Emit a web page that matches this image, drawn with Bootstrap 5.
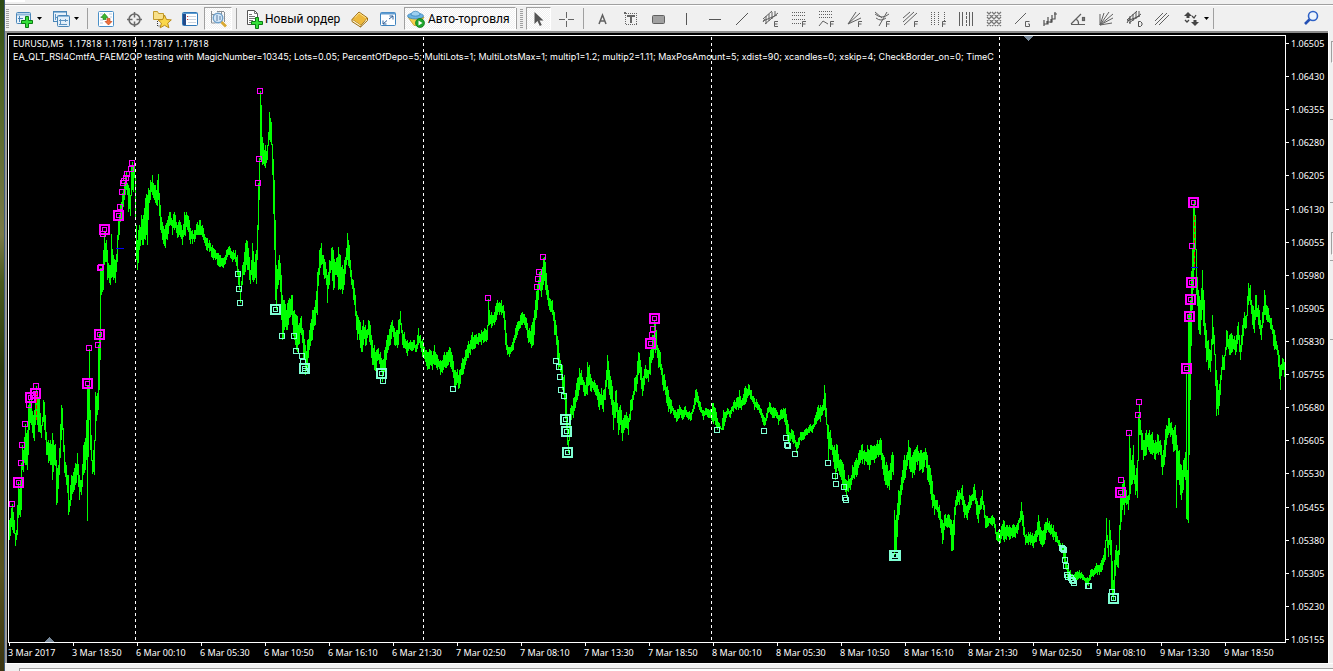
<!DOCTYPE html>
<html lang="ru">
<head>
<meta charset="utf-8">
<meta name="viewport" content="width=device-width, initial-scale=1">
<title>EURUSD,M5</title>
<link rel="stylesheet" href="https://cdn.jsdelivr.net/npm/bootstrap@5.3.0/dist/css/bootstrap.min.css">
<style>
  body { background: #f0f0f0; font-family: "Noto Sans", sans-serif; font-size: 9px; line-height: 13px; color: #000; overflow: hidden; }
  .wallpaper { width: 5px; border-right: 1px solid #3f5a78; background: linear-gradient(#2c4a14, #4f6424 12%, #7a7a48 35%, #4a5a1e 42%, #2c3a0c 55%, #4d4416 70%, #57531f 85%, #3a3410); }
  .menu-edge { height: 5px; border-bottom: 1px solid #a0a0a0; }
  .menu-edge i { width: 20px; height: 2px; background: #fff; }
  .tool-row { height: 26px; border-top: 1px solid #fff; padding-left: 1px; font: 12px/16px Roboto, sans-serif; }
  .tool-row button { border: 0; padding: 0; background: none; width: 28px; height: 23px; display: flex; align-items: center; justify-content: center; flex: none; color: #000; white-space: nowrap; }
  .tool-row svg { width: 20px; height: 20px; flex: none; }
  .tool-row button.with-menu { width: 37px; gap: 3px; }
  .tool-row svg.caret { width: 5px; height: 3px; }
  .tool-row button.order { width: 101px; justify-content: flex-start; }
  .tool-row button.auto { width: 112px; margin-left: 2px; gap: 2px; justify-content: flex-start; padding-left: 1px; }
  .tool-row button.arrow { width: 25px; }
  .tool-row button.pressed { border: 1px solid #a0a0a0; border-right-color: #fff; border-bottom-color: #fff; background: repeating-conic-gradient(#fff 0 25%, #f0f0f0 0 50%) 0 0 / 2px 2px; }
  .grip { width: 3px; height: 20px; background: repeating-linear-gradient(#a0a0a0 0 1px, #f0f0f0 1px 2px); flex: none; }
  .rule + .grip { margin: 0 3px; }
  .rule { width: 1px; height: 21px; background: #a0a0a0; flex: none; }
  .chart-window { background: #000; border-left: 2px solid #9a9a9a; border-top: 2px solid #8a8a8a; color: #fff; padding: 2px 0 0 1px; }
  .plot { border: 1px solid #fff; }
  .plot svg { width: 100%; height: 100%; }
  .plot-text { padding: 1px 0 0 4px; white-space: pre; }
  #status { font-family: Inter, sans-serif; }
  .prices { width: 42px; padding-top: 2px; margin-bottom: -3px; }
  .prices div::before { content: ""; width: 3px; height: 1px; background: #fff; margin-right: 2px; }
  .times { display: grid; grid-template-columns: repeat(20, 1fr); height: 20px; margin-right: 40px; }
  .times div { white-space: nowrap; padding-top: 3px; position: relative; }
  .times div::before { content: ""; position: absolute; left: 1px; top: 0; width: 1px; height: 3px; background: #fff; }
  .side { width: 5px; border-left: 1px solid #fff; display: grid; grid-template-rows: 10px 22px 56px 83px 30px 23px 5px 79px 1fr; padding-left: 1px; }
  .side i.lined { border-top: 1px solid #a0a0a0; }
  .side i.boxed { border: 1px solid #a0a0a0; border-right: 0; border-bottom-color: #fff; margin-left: 1px; }
  .below { height: 8px; border-top: 1px solid #fff; padding: 4px 0 0 14px; }
  .below div { border: 1px solid #a0a0a0; border-bottom: 0; border-right: 0; background: #fff; height: 3px; }
</style>
<script src="https://cdn.jsdelivr.net/npm/bootstrap@5.3.0/dist/js/bootstrap.bundle.min.js"></script>
</head>
<body>
<div class="d-flex vh-100">
  <div class="wallpaper flex-shrink-0"></div>
  <main class="d-flex flex-column flex-grow-1 overflow-hidden">
    <div class="menu-edge flex-shrink-0 d-flex"><i></i></div>

    <div class="tool-row d-flex align-items-center flex-shrink-0" role="toolbar" aria-label="Панель инструментов">
      <span class="grip"></span>
      <button class="with-menu" aria-label="Новый график"><svg viewBox="0 0 20 20"><rect x="2.500" y="3.500" width="14" height="11" rx="1" fill="#e8f2fb" stroke="#4a86b8"/><path d="M3 5.500h13" stroke="#8fb8da" stroke-width="2"/><path d="M5.500 7v6M4 9.500h5" stroke="#4a86b8" fill="none"/><path d="M11.500 7.500h3v4h4v3h-4v4h-3v-4h-4v-3h4z" fill="#35e03a" stroke="#0b7d12"/></svg><svg class="caret" viewBox="0 0 5 3"><path d="M0 0h5L2.500 3z"/></svg></button>
      <button class="with-menu" aria-label="Профили"><svg viewBox="0 0 20 20"><rect x="2.500" y="2.500" width="13" height="10" fill="#e8f2fb" stroke="#4a86b8"/><path d="M3 3.500h12" stroke="#8fb8da"/><path d="M4.500 5v6M4 8.500h3" stroke="#5e94c2"/><rect x="6.500" y="6.500" width="12" height="11" rx="1" fill="#e3eff9" stroke="#4a86b8"/><path d="M7 7.500h11" stroke="#8fb8da"/><path d="M8 11.500h9M9.500 10v6M14.500 10v3M8 15.500h8" stroke="#5e94c2"/></svg><svg class="caret" viewBox="0 0 5 3"><path d="M0 0h5L2.500 3z"/></svg></button>
      <span class="rule ms-1 me-1"></span>
      <button aria-label="Обзор рынка"><svg viewBox="0 0 20 20"><rect x="2.500" y="2.500" width="15" height="15" rx="1" fill="#fff" stroke="#4a90c8"/><path d="M4 5h3M4 8h2M4 11h3M4 14h3M13 5h3M14 8h2" stroke="#bcd"/><path d="M8.500 4.500l3.500 4h-2v2H7v-2H5z" fill="#3db72f" stroke="#1d7d14" stroke-width=".6"/><path d="M12.500 16L9 12.500h2v-3h3v3h2z" fill="#f0713c" stroke="#b93d12" stroke-width=".6"/></svg></button>
      <button aria-label="Окно данных"><svg viewBox="0 0 20 20" fill="none" stroke="#6a6a6a" stroke-width="1.500"><circle cx="10.500" cy="10.500" r="5.500"/><path d="M10.500 3v5.500M10.500 12.500V18M3 10.500h5.500M12.500 10.500H18"/></svg></button>
      <button aria-label="Навигатор"><svg viewBox="0 0 20 20"><path d="M1.500 2.500h4l1 2h5v6h-10z" fill="#f8e08a" stroke="#c29a2a"/><path d="M5.500 12v5h4" stroke="#333" stroke-dasharray="1 1" fill="none"/><path d="M12.500 6l2 4.500 4.800.4-3.600 3.200 1.200 4.700-4.400-2.500-4.300 2.500 1.200-4.700L6 10.900l4.700-.4z" fill="#fbd84b" stroke="#b98a17"/></svg></button>
      <button aria-label="Терминал"><svg viewBox="0 0 20 20"><rect x="2.500" y="3.500" width="15" height="13" rx="1" fill="#fff" stroke="#2f78b8"/><path d="M3 4.500h14" stroke="#5e9bd0"/><path d="M3 5h3v11H3z" fill="#234a8a"/><path d="M8 7.500h8M8 10.500h8M8 13.500h8" stroke="#c9d3df"/><path d="M7 7.500h1M7 10.500h1" stroke="#d33"/></svg></button>
      <button class="pressed" aria-label="Тестер стратегий"><svg viewBox="0 0 20 20"><path d="M3.500 2v12h4M3.500 5.500h4M13.500 2v3M16.500 3v10M9 2.500h7" stroke="#8a8f94" fill="none"/><circle cx="10" cy="9" r="4.800" fill="#cfe4f7" fill-opacity=".9" stroke="#6f9fc8" stroke-width="1.400"/><path d="M9 6v6M12 7v4" stroke="#5b7fa5"/><path d="M13.500 13l4.500 4.500" stroke="#d9a934" stroke-width="2.800"/></svg></button>
      <span class="rule ms-1 me-2"></span>
      <button class="order"><svg viewBox="0 0 20 20"><path d="M2.500 1.500h7l3 3v11h-10z" fill="#fff" stroke="#555"/><path d="M9.500 1.500v3h3M4 5.500h3M4 7.500h6M4 9.500h6M4 11.500h4M4 13.500h2" stroke="#777" fill="none"/><path d="M10.500 8.500h3v4h4v3h-4v4h-3v-4h-4v-3h4z" fill="#35e03a" stroke="#0b7d12"/></svg>Новый ордер</button>
      <button aria-label="Редактор MetaEditor"><svg viewBox="0 0 20 20"><path d="M2 10.500L9 3l8.500 6-6.500 7.500z" fill="#edb93d" stroke="#9a6c12"/><path d="M2 10.500v2l8.500 5.500.5-1.500M17.500 9v2.500l-7 6.500" fill="#fff2c8" stroke="#9a6c12"/><path d="M5 8.500L9 4l7 5" stroke="#ffe391" fill="none"/></svg></button>
      <button aria-label="Во весь экран"><svg viewBox="0 0 20 20"><rect x="2.500" y="3.500" width="15" height="13" rx="1" fill="#fdfeff" stroke="#3d83bf"/><path d="M3 4.500h14" stroke="#5e9bd0" stroke-width="2"/><path d="M11 10l4-3M15 10.500V7h-3.500M9 11.500L5 15M5 11.500V15h3.500" stroke="#2c5f98" fill="none"/></svg></button>
      <button class="auto pressed"><svg viewBox="0 0 20 20"><path d="M2 8l16 0-5 8.500H8z" fill="#f5d04a" stroke="#b98f1e" stroke-width=".7"/><ellipse cx="9.500" cy="7" rx="8" ry="3" fill="#6db3e3" stroke="#2f7db5" stroke-width=".7"/><path d="M5 6c0-5 9-5 9 0-2 1.500-7 1.500-9 0z" fill="#9dd0f1" stroke="#2f7db5" stroke-width=".7"/><circle cx="14" cy="14" r="4.500" fill="#1fa52c" stroke="#0b7416" stroke-width=".7"/><path d="M12.500 11.500v5L16.500 14z" fill="#fff"/></svg>Авто-торговля</button>
      <span class="rule"></span>
      <span class="grip"></span>
      <button class="arrow pressed" aria-label="Курсор"><svg viewBox="0 0 20 20"><path d="M5.500 3v12l3-3 2.300 5 2-1-2.300-4.500h4z" fill="#555"/></svg></button>
      <button aria-label="Перекрестие"><svg viewBox="0 0 20 20" shape-rendering="crispEdges"><path d="M11.500 3v6M11.500 12v6M4 10.500h6M13 10.500h6" stroke="#666"/></svg></button>
      <span class="rule ms-1 me-1"></span>
      <button aria-label="Текст"><svg viewBox="0 0 20 20"><path d="M7 15l3.500-9 3.500 9M8 12h5" fill="none" stroke="#606060" stroke-width="1.500"/></svg></button>
      <button aria-label="Текстовая метка"><svg viewBox="0 0 20 20" shape-rendering="crispEdges"><rect x="5.500" y="4.500" width="11" height="11" fill="none" stroke="#666" stroke-dasharray="1 1"/><path d="M4 3h2v2H4zM7 6h8v2h-3v6h-2V8H7z" fill="#666"/></svg></button>
      <button aria-label="Прямоугольник"><svg viewBox="0 0 20 20"><rect x="4.500" y="6.500" width="12" height="8" rx="1" fill="#a0a0a0" stroke="#606060"/></svg></button>
      <button aria-label="Вертикальная линия"><svg viewBox="0 0 20 20"><path d="M10.500 4v12" stroke="#555"/></svg></button>
      <button aria-label="Горизонтальная линия"><svg viewBox="0 0 20 20"><path d="M5 10.500h12" stroke="#555"/></svg></button>
      <button aria-label="Трендовая линия"><svg viewBox="0 0 20 20"><path d="M4 16L16 4" stroke="#555"/></svg></button>
      <button aria-label="Равноудаленный канал"><svg viewBox="0 0 20 20" fill="none" stroke="#606060"><path d="M3 10L12 2M5 15L18 4M3 13l2-3M6 15V7M9 12V5M12 10V3M15 7V2M3 12l14-6"/><path d="M18 12.500h-3.500v5H18M14.500 15h3"/></svg></button>
      <button aria-label="Линии Фибоначчи"><svg viewBox="0 0 20 20" fill="none" stroke="#606060"><path d="M4 3.500h13M4 6.500h13M4 10.500h13M4 14.500h9" stroke-dasharray="1 1"/><path d="M14.500 18v-5.500H18M14.500 15h3"/></svg></button>
      <button aria-label="Расширение Фибоначчи"><svg viewBox="0 0 20 20" fill="none" stroke="#606060"><path d="M3 2.500h14M3 5.500h14M3 8.500h14" stroke-dasharray="1 1"/><path d="M3 17l4-5 5 3M14.500 18v-5.500H18M14.500 15h3"/></svg></button>
      <button aria-label="Веер Фибоначчи"><svg viewBox="0 0 20 20" fill="none" stroke="#606060"><path d="M4 15L12 3M4 15L16 4M4 15L17 9M14.500 18v-5.500H18M14.500 15h3"/></svg></button>
      <button aria-label="Дуги Фибоначчи"><svg viewBox="0 0 20 20" fill="none" stroke="#606060"><path d="M7 17L15 3M3 5q7 6 14 0M4 9q5 4 10 0M14.500 18v-5.500H18M14.500 15h3M3 3l7 6"/></svg></button>
      <button aria-label="Канал Фибоначчи"><svg viewBox="0 0 20 20" fill="none" stroke="#606060"><path d="M3 9L10 3M3 13L14 3M4 16L17 4M14.500 18v-5.500H18M14.500 15h3" /></svg></button>
      <button aria-label="Временные зоны Фибоначчи"><svg viewBox="0 0 20 20" fill="none" stroke="#606060"><path d="M3.500 3v13M6.500 3v13M10.500 3v13M16.500 3v9" stroke-dasharray="1 1"/><path d="M14.500 18v-5.500H18M14.500 15h3"/></svg></button>
      <button aria-label="Циклические линии"><svg viewBox="0 0 20 20" stroke="#606060"><path d="M3.500 3v14M6.500 3v14M13.500 3v14M16.500 3v14"/><path d="M10.500 3v14" stroke-dasharray="3 1"/></svg></button>
      <button aria-label="Сетка Ганна"><svg viewBox="0 0 20 20" stroke="#777" stroke-width="1.200"><path d="M3 7l4-4M3 12l9-9M3 17L17 3M8 17l9-9M13 17l4-4M3 13l4 4M3 8l9 9M3 3l14 14M8 3l9 9M13 3l4 4"/></svg></button>
      <button aria-label="Линия Ганна"><svg viewBox="0 0 20 20" fill="none" stroke="#606060"><path d="M3 15L14 4M17.500 12.500h-4v5h4V15H16"/></svg></button>
      <button aria-label="Волны"><svg viewBox="0 0 20 20" fill="none" stroke="#505050" stroke-width="1.200"><path d="M4 17V11M4 15h4V8M7 12v3M8 13h4V6M11 10v4M12 10h3V3M14 5h3"/></svg></button>
      <button aria-label="Тренд по углу"><svg viewBox="0 0 20 20" fill="none" stroke="#606060" stroke-width="1.200"><path d="M3 15.500h14M3 15L13 5M8 10q3 2 2.500 5"/><rect x="14.500" y="8.500" width="2" height="3"/></svg></button>
      <button aria-label="Веер Ганна"><svg viewBox="0 0 20 20" fill="none" stroke="#606060"><path d="M4 16V5M4 16L8 4M4 16L13 3M4 16L17 5M4 16l13-7M4 16l12-2"/></svg></button>
      <button aria-label="Стандартное отклонение"><svg viewBox="0 0 20 20" fill="none" stroke="#505050"><path d="M3 11L13 2M5 14L17 5M3 14l3-5M6 15V7M9 12V5M12 10V3M15 7V2M3 12l13-5M14.500 12.500h2l1.500 1.500v2l-1.500 1.500h-2z"/></svg></button>
      <button aria-label="Канал"><svg viewBox="0 0 20 20" stroke="#606060"><path d="M3 12L11 4M3 16L15 4M7 16L17 6"/></svg></button>
      <button class="with-menu" aria-label="Стрелки"><svg viewBox="0 0 20 20" fill="#444"><path d="M7 3l4 4H8.500v2h-3V7H3zM14 17l-4-4h2.500v-2h3v2H18z"/><path d="M4 11l2 2 2-2M11 7l2 2 2-3" fill="none" stroke="#444" stroke-width="1.300"/></svg><svg class="caret" viewBox="0 0 5 3"><path d="M0 0h5L2.500 3z"/></svg></button>
      <span class="rule"></span>
      <button class="ms-auto me-2" aria-label="Поиск"><svg viewBox="0 0 20 20"><circle cx="12" cy="7" r="4.500" fill="#eef5fd" stroke="#2f62c6" stroke-width="1.600"/><path d="M8.500 10.500L4 15" stroke="#2450b4" stroke-width="2.600"/></svg></button>
    </div>

    <div class="d-flex flex-grow-1">
      <section class="chart-window d-flex flex-column flex-grow-1" aria-label="EURUSD,M5">
        <div class="d-flex flex-grow-1">
          <div class="plot position-relative flex-grow-1">
            <svg id="chart" class="position-absolute top-0 start-0" viewBox="9 36 1276 606" preserveAspectRatio="none" shape-rendering="crispEdges" fill="none"></svg>
            <div class="plot-text position-relative"><div id="quote">EURUSD,M5  1.17818 1.17819 1.17817 1.17818</div><div id="status">EA_QLT_RSI4CmtfA_FAEM2QP testing with MagicNumber=10345; Lots=0.05; PercentOfDepo=5; MultiLots=1; MultiLotsMax=1; multip1=1.2; multip2=1.11; MaxPosAmount=5; xdist=90; xcandles=0; xskip=4; CheckBorder_on=0; TimeC</div></div>
          </div>
          <div id="prices" class="prices d-flex flex-column justify-content-between"></div>
        </div>
        <div id="times" class="times"></div>
      </section>
      <aside class="side">
        <i></i><i class="boxed"></i><i></i><i class="lined"></i><i class="lined"></i><i class="boxed"></i><i></i><i class="lined"></i><i class="lined"></i>
      </aside>
    </div>
    <div class="below flex-shrink-0"><div></div></div>
  </main>
</div>

<script>
// Axis labels
const prices = document.getElementById('prices');
for (let i = 0; i < 19; i++)
  prices.insertAdjacentHTML('beforeend', `<div class="d-flex align-items-center">${(1.06505 - i * 0.00075).toFixed(5)}</div>`);
const times = '3 Mar 2017|3 Mar 18:50|6 Mar 00:10|6 Mar 05:30|6 Mar 10:50|6 Mar 16:10|6 Mar 21:30|7 Mar 02:50|7 Mar 08:10|7 Mar 13:30|7 Mar 18:50|8 Mar 00:10|8 Mar 05:30|8 Mar 10:50|8 Mar 16:10|8 Mar 21:30|9 Mar 02:50|9 Mar 08:10|9 Mar 13:30|9 Mar 18:50';
document.getElementById('times').innerHTML = times.split('|').map(t => `<div>${t}</div>`).join('');

// Price bars: x, high, low; values between the listed bars are interpolated
const bars = `9 520 540,10 518 536,12 504 530,14 520 534,15 533 546,16 530 540,17 505 535,18 482 518,20 485 517,21 463 510,22 445 470,23 450 472,25 424 465,27 430 470,28 405 455,29 400 430,31 396 425,33 415 438,34 410 441,36 386 420,37 395 425,39 392 432,41 425 438,43 400 422,44 402 430,46 432 455,48 440 463,50 440 465,52 433 480,54 445 465,55 444 466,56 460 505,57 468 503,59 448 475,61 405 440,62 408 430,64 445 473,66 465 485,68 475 515,69 500 512,71 475 500,73 472 492,75 463 485,77 453 475,79 475 500,81 480 495,83 445 475,85 438 470,86 420 460,87 385 521,88 385 457,89 349 420,90 410 450,92 460 474,94 440 475,95 392 425,97 393 415,98 345 410,99 334 390,100 268 360,101 268 295,102 270 292,103 250 290,104 232 265,106 240 262,107 250 280,109 265 283,110 265 285,111 234 278,113 255 280,115 260 283,117 235 262,118 220 240,119 215 235,120 205 222,122 193 215,124 182 200,126 172 190,128 185 212,130 195 216,131 165 195,132 162 190,133 165 192,134 160 178,
136 225 260,137 240 270,139 225 250,141 215 240,143 215 245,145 198 240,147 195 245,148 188 220,150 180 200,152 175 195,154 185 200,156 190 205,158 174 200,160 205 230,162 222 240,165 225 248,167 220 240,170 212 225,172 220 235,174 212 230,177 225 238,179 220 235,182 230 245,184 212 235,187 215 230,189 220 240,192 230 244,194 230 242,197 222 235,200 220 235,203 228 240,206 238 250,209 240 252,212 245 258,215 250 260,218 253 266,220 255 267,223 258 268,226 250 260,229 246 255,232 252 262,235 250 262,237 255 275,239 272 290,240 290 303,242 265 285,244 252 275,246 240 265,248 248 270,250 270 284,252 243 280,254 262 280,256 250 284,257 225 260,258 183 230,259 158 200,260 91 160,261 105 160,262 137 165,264 150 166,265 145 168,267 145 160,269 112 140,271 122 145,272 145 175,274 180 250,275 220 300,276 265 310,278 260 285,279 255 280,281 275 320,282 295 340,284 300 330,286 310 330,288 300 325,291 295 315,292 295 325,294 310 340,296 315 350,298 325 345,301 316 335,303 330 360,305 345 375,307 340 372,309 330 350,312 310 340,315 300 325,317 272 315,319 250 275,321 243 265,323 255 275,325 262 278,327 275 303,329 260 285,331 248 270,333 250 290,336 258 275,338 247 290,340 255 290,342 265 294,344 260 285,346 248 265,347 233 260,349 245 268,351 270 285,353 280 300,355 295 316,357 315 340,359 320 340,361 330 352,363 320 345,366 330 345,368 320 335,370 325 345,372 340 365,374 345 370,376 350 368,378 348 360,380 352 370,382 360 382,384 350 372,386 340 360,388 335 350,390 325 345,392 320 332,394 328 345,396 330 345,398 320 345,400 311 325,402 330 345,404 332 348,407 340 356,410 340 350,413 340 350,416 344 352,418 328 345,420 335 348,423 342 358,425 350 362,427 352 370,430 350 365,432 355 370,434 345 365,437 355 370,440 360 375,443 355 370,446 352 368,449 347 362,452 355 372,454 370 388,456 372 385,459 370 388,462 358 375,465 350 365,467 345 358,470 340 355,472 332 350,475 335 348,478 333 345,481 330 345,484 328 342,487 325 340,488 299 320,489 310 325,491 312 328,494 312 325,497 300 315,499 302 315,501 300 315,503 305 318,505 320 345,507 345 355,509 347 357,511 345 352,513 338 350,515 328 340,517 322 335,520 315 328,522 312 325,524 314 325,526 318 330,528 330 343,531 325 348,533 318 345,535 300 320,537 285 310,539 272 290,541 275 297,543 258 285,545 262 290,547 285 300,549 298 310,552 300 315,554 312 335,556 325 345,558 340 370,560 360 372,562 365 390,564 375 400,566 395 430,567 415 445,568 440 453,569 415 440,571 405 420,573 398 418,575 390 408,577 378 400,579 368 390,581 370 385,583 380 392,585 385 396,587 362 395,589 365 385,591 378 392,594 380 392,597 385 400,599 392 410,601 388 405,603 390 412,605 380 400,607 355 380,609 370 395,611 380 405,613 400 430,616 390 412,618 410 435,620 405 425,622 420 441,624 415 430,626 412 428,628 418 435,630 400 420,632 395 410,634 378 395,636 375 392,638 352 375,640 360 380,
642 378 396,645 365 378,648 370 382,650 350 375,652 335 360,654 320 350,656 330 350,658 348 368,660 352 370,662 368 385,665 380 395,668 390 412,671 400 413,674 410 418,676 412 422,679 405 418,682 410 420,685 406 415,688 412 420,691 412 420,693 405 412,695 390 405,697 392 403,700 402 412,703 410 420,706 408 415,709 410 418,711 410 420,712 403 422,715 408 425,717 418 430,719 423 430,721 428 430,723 410 430,725 412 422,727 408 415,730 410 418,733 402 412,736 398 410,739 390 408,741 400 410,744 388 405,746 388 402,749 385 395,751 390 400,754 398 410,757 402 410,760 408 415,763 415 425,765 418 425,767 408 418,769 402 412,772 408 418,775 408 416,778 415 425,780 410 420,783 408 418,785 408 425,787 420 440,789 432 443,792 430 442,794 435 443,796 442 453,798 438 448,800 432 440,803 432 440,806 428 435,809 425 433,812 425 433,815 415 425,818 405 420,820 405 422,822 405 415,824 385 410,826 408 425,828 425 460,830 430 450,832 445 455,835 450 480,837 445 468,839 460 475,842 462 485,844 470 490,846 480 498,848 475 492,850 478 490,852 465 480,855 460 475,857 460 475,859 450 465,861 445 460,864 450 465,867 445 465,869 450 470,871 445 460,874 445 463,877 440 455,879 440 455,881 440 460,883 455 475,885 465 485,887 465 488,889 470 490,891 455 480,893 455 475,894 510 555,896 515 550,898 490 520,900 485 505,902 470 490,904 455 480,906 455 470,908 440 460,910 448 472,912 455 478,914 450 475,917 445 465,920 450 470,923 452 472,925 448 460,927 455 480,929 465 485,931 475 500,934 495 515,936 500 510,939 505 520,942 520 544,944 515 530,947 515 528,949 515 528,951 520 551,953 520 550,955 500 515,957 490 505,959 490 505,961 488 500,
962 485 505,964 500 518,967 505 520,969 495 510,971 495 505,974 484 500,976 498 515,978 505 523,980 498 510,982 490 505,985 515 528,988 518 526,991 516 525,994 518 528,996 532 540,998 530 542,1000 530 543,1003 520 540,1006 525 540,1009 525 540,1012 525 538,1015 527 538,1018 520 530,1021 502 520,1023 515 535,1025 535 545,1028 532 545,1030 532 545,1033 536 548,1036 530 542,1038 515 535,1041 530 545,1043 530 545,1045 522 540,1047 518 530,1050 525 535,1053 525 540,1056 532 542,1059 540 548,1062 543 552,1065 552 568,1067 565 580,1070 570 580,1073 575 580,1076 572 582,1079 570 578,1082 574 580,1085 578 583,1088 578 586,1090 570 580,1093 570 577,1096 563 573,1099 565 575,1101 560 572,1103 555 565,1105 540 560,1106 518 540,1108 540 557,1109 520 545,1110 530 555,1111 540 590,1113 580 600,1114 560 590,1116 545 565,1118 550 568,1119 525 555,1120 495 530,1122 484 510,1124 480 515,1126 490 505,1128 495 510,1129 434 500,1131 460 485,1133 445 480,1135 475 495,1137 460 498,1138 415 450,1139 404 435,1141 430 450,1143 440 460,1146 430 455,1149 430 452,1152 432 455,1155 440 460,1158 435 455,1160 440 455,1162 455 475,1164 440 465,1166 425 445,1168 418 435,1171 422 435,1173 430 452,1175 425 450,1176 435 508,1177 445 480,1179 450 485,1181 465 500,1183 460 490,1185 452 480,1186 372 519,1187 470 520,1188 315 523,1190 300 400,1192 248 310,1193 205 290,1194 200 270,1195 215 250,1196 270 295,1198 290 330,1200 300 335,1202 270 310,1204 300 335,1206 330 362,1208 340 370,1210 350 372,1212 315 345,1214 335 355,1216 370 416,1218 390 415,1220 375 395,1222 355 370,1224 355 370,1226 330 350,1229 335 355,1232 335 352,1235 340 355,1238 322 340,1240 345 360,1242 325 345,1244 312 328,1246 315 328,1248 283 305,1250 285 305,1252 305 325,1254 310 333,1255 295 320,1258 305 325,1261 325 340,1264 290 315,1266 305 320,1268 308 322,1271 318 330,1274 330 350,1277 345 355,1280 365 390,1282 358 370,1284 362 377`
  .split(',').map(s => s.trim().split(' ').map(Number));

let seed = 7;
const rnd = () => (seed = (seed * 16807) % 2147483647) / 2147483647;
let d = '', prev = null;
bars.forEach((b, i) => {
  const n = bars[i + 1] || [b[0] + 1, b[1], b[2]];
  for (let x = b[0]; x < n[0]; x++) {
    const k = (x - b[0]) / (n[0] - b[0]);
    let hi = b[1] + (n[1] - b[1]) * k, lo = b[2] + (n[2] - b[2]) * k;
    const h = Math.min(lo - hi, 30);
    if (k > 0) { hi += h * (rnd() * .45 - .15); lo -= h * (rnd() * .45 - .15); }
    if (prev && x !== 894 && x !== 136) { hi = Math.min(hi, prev[1] - 1); lo = Math.max(lo, prev[0] + 1); }
    prev = [hi, lo];
    d += `M${x}.5 ${Math.round(hi)}V${Math.round(lo)}`;
  }
});

// Markers: one pixel frame for a signal, a heavy frame around it for a deal
const list = s => s.split(' ').map(p => p.split(',').map(Number));
const small = (s, c) => list(s).map(([x, y]) => `<rect x="${x - 2.5}" y="${y - 2.5}" width="5" height="5" stroke="${c}"/>`).join('');
const large = (s, c) => list(s).map(([x, y]) => `<rect x="${x - 4}" y="${y - 4}" width="9" height="9" stroke="${c}" stroke-width="2"/><rect x="${x - 1.5}" y="${y - 1.5}" width="4" height="4" stroke="${c}"/>`).join('');

document.getElementById('chart').innerHTML =
  `<path d="${d}" stroke="#00ff00"/>` +
  [135, 423, 711, 999].map(x => `<path d="M${x}.5 37V642" stroke="#fff" stroke-dasharray="3 3"/>`).join('') +
  `<path d="M1194.500 216V267M36.500 393V420" stroke="#f00" stroke-dasharray="4 2"/><path d="M116 248.500h8M1191 267.500h7" stroke="#00f"/>` +
  small('12,504 21,463 22,445 25,424 29,405 36,386 89,348 98,345 100,268 101,267 103,234 120,207 122,192 123,183 124,181 126,178 127,174 131,169 132,163 260,91 259,159 258,183 488,298 537,287 538,279 539,272 543,257 652,335 653,329 1121,480 1129,433 1138,415 1139,402 1192,246', '#ff00ff') +
  large('18,482 30,397 35,393 87,383 99,334 104,229 118,215 650,343 654,318 1120,492 1186,368 1189,316 1190,299 1191,282 1193,202', '#ff00ff') +
  small('238,274 239,289 240,303 282,336 294,336 296,351 302,356 303,362 305,371 383,381 453,389 556,361 559,367 560,377 561,390 564,396 717,430 764,431 786,438 787,445 788,446 795,454 828,463 835,476 836,484 844,487 845,498 846,500 1062,548 1063,549 1064,550 1065,560 1066,566 1067,575 1068,577 1071,578 1072,580 1073,581 1074,583 1088,586 1089,586 1112,592', '#7fffd4') +
  large('275,309 304,368 381,373 565,419 566,431 567,452 894,555 895,555 1113,598', '#7fffd4') +
  `<path d="M1023 36h11l-5.500 5zM44 642h11l-5.500-5z" fill="#778899"/>`;
</script>
</body>
</html>
